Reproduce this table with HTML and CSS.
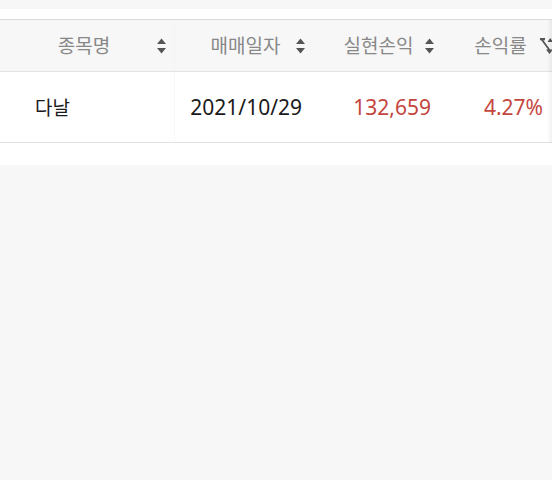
FILE: index.html
```html
<!DOCTYPE html>
<html lang="ko">
<head>
    <meta charset="UTF-8">
    <meta name="viewport" content="width=device-width, initial-scale=1.0">
    <title>매매내역</title>
    <link rel="stylesheet" href="styles.css">
</head>
<body>
    <div class="panel">
        <div class="table">
            <div class="row head">
                <div class="cell c1"><span class="label">종목명</span><svg class="sort" viewBox="0 0 9 16"><path d="M0 6 L4.5 0.5 L9 6 Z M0 10 L9 10 L4.5 15.5 Z"/></svg></div>
                <div class="cell c2"><span class="label">매매일자</span><svg class="sort" viewBox="0 0 9 16"><path d="M0 6 L4.5 0.5 L9 6 Z M0 10 L9 10 L4.5 15.5 Z"/></svg></div>
                <div class="cell c3"><span class="label">실현손익</span><svg class="sort" viewBox="0 0 9 16"><path d="M0 6 L4.5 0.5 L9 6 Z M0 10 L9 10 L4.5 15.5 Z"/></svg></div>
                <div class="cell c4"><span class="label">손익률</span><svg class="sort active" viewBox="0 0 13 18"><path d="M0 1 H5 V3.2 H3.4 L10.2 12.5 H13 L9.5 17 L6 12.5 H8 L1.2 3.2 H0 Z M7.5 5 L10.2 1 L13 5 Z"/></svg></div>
            </div>
            <div class="row body">
                <div class="cell c1 name">다날</div>
                <div class="cell c2">2021/10/29</div>
                <div class="cell c3 up">132,659</div>
                <div class="cell c4 up">4.27%</div>
            </div>
        </div>
    </div>
</body>
</html>
```

FILE: styles.css
```css
body {
    margin: 0;
    padding-top: 9px;
    background-color: #f7f7f7;
    font-family: "Noto Sans", "Noto Sans CJK KR", sans-serif;
}
.panel {
    background-color: #fff;
    padding: 10px 0 22px;
}
.table {
    position: relative;
    overflow: hidden;
    border-top: 1px solid #d9d9d9;
}
.table::after {
    content: "";
    position: absolute;
    top: 0;
    right: 0;
    width: 5px;
    height: 100%;
    background: linear-gradient(to right, rgba(0,0,0,0), rgba(0,0,0,0.06));
}
.row {
    display: grid;
    grid-template-columns: 175px 141px 125px 119px;
    border-bottom: 1px solid #e3e3e3;
}
.cell {
    display: flex;
    align-items: center;
}
.c1 {
    border-right: 1px solid #f3f3f3;
}
.head {
    height: 51px;
    background-color: #f7f7f7;
}
.head .cell {
    color: #888;
    font-size: 19px;
    font-family: "Noto Sans CJK KR", sans-serif;
}
.head .label {
    flex: 1;
    text-align: center;
    margin-top: -2px;
}
.sort {
    width: 9px;
    height: 16px;
    fill: #555;
    flex-shrink: 0;
}
.sort.active {
    width: 13px;
    height: 18px;
}
.head .c1 { padding-right: 8px; }
.head .c1 .label { padding-left: 11px; }
.head .c2 { padding-right: 11px; }
.head .c2 .label { padding-left: 20px; }
.head .c3 { padding-right: 7px; }
.head .c3 .label { padding-left: 16px; }
.head .c4 { padding-right: 7px; }
.head .c4 .label { padding-left: 20px; }
.body {
    height: 70px;
    background-color: #fff;
}
.body .c1 {
    border-right-color: #f8f8f8;
}
.body .cell {
    font-size: 21px;
    color: #1a1a1a;
    justify-content: flex-end;
}
.body .name {
    justify-content: flex-start;
    padding-left: 35px;
    font-size: 19px;
}
.body .c2 { padding-right: 14px; }
.body .c3 { padding-right: 10px; }
.body .c4 { padding-right: 17px; }
.body .up {
    color: #c4463e;
}
```
